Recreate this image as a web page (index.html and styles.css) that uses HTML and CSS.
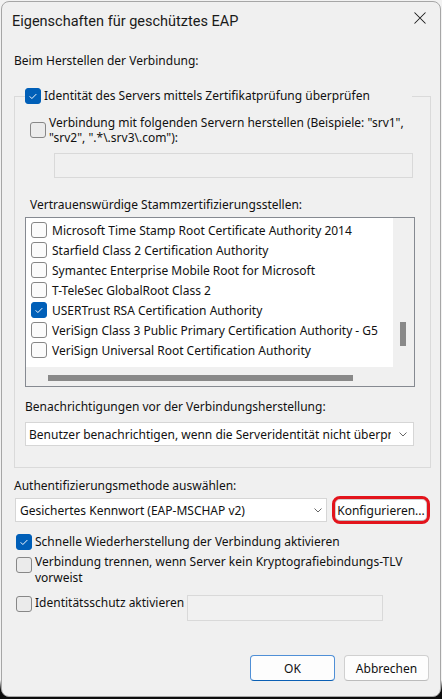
FILE: index.html
```html
<!DOCTYPE html>
<html lang="de">
<head>
<meta charset="utf-8">
<title>Eigenschaften für geschütztes EAP</title>
<link rel="stylesheet" href="styles.css">
</head>
<body>
<div class="window">
  <header class="titlebar">
    <span class="title">Eigenschaften für geschütztes EAP</span>
    <svg class="close" viewBox="0 0 12 12"><path d="M0.5 0.5L11.5 11.5M11.5 0.5L0.5 11.5"/></svg>
  </header>
  <main class="content">
    <div class="label">Beim Herstellen der Verbindung:</div>
    <fieldset class="group">
      <legend class="group-legend">
        <span class="cb on"><svg viewBox="0 0 16 16"><path d="M4.2 8.4l2.5 2.5L11.8 5.8"/></svg></span>
        <span>Identität des Servers mittels Zertifikatprüfung überprüfen</span>
      </legend>
      <div class="check-row servers">
        <span class="cb"></span>
        <span>Verbindung mit folgenden Servern herstellen (Beispiele: "srv1", "srv2", ".*\.srv3\.com"):</span>
      </div>
      <div class="edit servers-edit"></div>
      <div class="label trusted-label">Vertrauenswürdige Stammzertifizierungsstellen:</div>
      <div class="list">
        <div class="list-items">
          <div class="item"><span class="cb"></span><span>Microsoft Time Stamp Root Certificate Authority 2014</span></div>
          <div class="item"><span class="cb"></span><span>Starfield Class 2 Certification Authority</span></div>
          <div class="item"><span class="cb"></span><span>Symantec Enterprise Mobile Root for Microsoft</span></div>
          <div class="item"><span class="cb"></span><span>T-TeleSec GlobalRoot Class 2</span></div>
          <div class="item"><span class="cb on"><svg viewBox="0 0 16 16"><path d="M4.2 8.4l2.5 2.5L11.8 5.8"/></svg></span><span>USERTrust RSA Certification Authority</span></div>
          <div class="item"><span class="cb"></span><span>VeriSign Class 3 Public Primary Certification Authority - G5</span></div>
          <div class="item"><span class="cb"></span><span>VeriSign Universal Root Certification Authority</span></div>
        </div>
        <div class="vscroll"><div class="vthumb"></div></div>
        <div class="hscroll"><div class="hthumb"></div></div>
        <div class="corner"></div>
      </div>
      <div class="label notify-label">Benachrichtigungen vor der Verbindungsherstellung:</div>
      <div class="select notify-select">
        <span class="select-text">Benutzer benachrichtigen, wenn die Serveridentität nicht überprüft werden kann</span>
        <svg class="chev" viewBox="0 0 8 5"><path d="M0.5 0.5L4 4L7.5 0.5"/></svg>
      </div>
    </fieldset>
    <div class="label auth-label">Authentifizierungsmethode auswählen:</div>
    <div class="method-row">
      <div class="select method-select">
        <span class="select-text">Gesichertes Kennwort (EAP-MSCHAP v2)</span>
        <svg class="chev" viewBox="0 0 8 5"><path d="M0.5 0.5L4 4L7.5 0.5"/></svg>
      </div>
      <button class="btn config">Konfigurieren...</button>
    </div>
    <div class="check-row single fast">
      <span class="cb on"><svg viewBox="0 0 16 16"><path d="M4.2 8.4l2.5 2.5L11.8 5.8"/></svg></span>
      <span>Schnelle Wiederherstellung der Verbindung aktivieren</span>
    </div>
    <div class="check-row top disconnect">
      <span class="cb"></span>
      <span>Verbindung trennen, wenn Server kein Kryptografiebindungs-TLV vorweist</span>
    </div>
    <div class="check-row top ident">
      <span class="cb"></span>
      <span class="ident-text">Identitätsschutz aktivieren</span>
      <div class="edit ident-edit"></div>
    </div>
    <footer class="actions">
      <button class="btn primary">OK</button>
      <button class="btn">Abbrechen</button>
    </footer>
  </main>
</div>
</body>
</html>
```
FILE: styles.css
```css
* { box-sizing: border-box; }
html, body { margin: 0; padding: 0; }
body {
  width: 442px;
  height: 699px;
  overflow: hidden;
  background: linear-gradient(#f2f2f2 0, #f2f2f2 680px, #0c0c0c 690px);
  font-family: "Noto Sans", "Segoe UI", Roboto, sans-serif;
  font-size: 12px;
  color: #111;
}
.window {
  margin: 1px 1px 0 1px;
  width: 440px;
  height: 696px;
  border: 1px solid #a6a6a6;
  border-radius: 8px;
  background: #f0f0f0;
  display: flex;
  flex-direction: column;
  overflow: hidden;
}
.titlebar {
  height: 38px;
  flex: none;
  display: flex;
  align-items: center;
  justify-content: space-between;
  padding: 0 14px 0 10px;
}
.title { font-family: Roboto, "Noto Sans", sans-serif; font-size: 14.5px; color: #1a1a1a; }
.close { width: 12px; height: 12px; margin-bottom: 6px; }
.close path { stroke: #1a1a1a; stroke-width: 1.05; fill: none; }

.content {
  flex: 1;
  display: flex;
  flex-direction: column;
  padding: 13px 9px 15px 12px;
}
.label { line-height: 16px; white-space: nowrap; }

.group {
  margin: 19px 0 0;
  padding: 0 0 21px;
  border: 1px solid #dadada;
  min-width: 0;
}
.group-legend {
  margin-left: 10px;
  padding: 0;
  width: 387px;
  height: 16px;
  display: flex;
  align-items: center;
  gap: 3px;
  line-height: 16px;
  white-space: nowrap;
}

.cb {
  width: 16px;
  height: 16px;
  flex: none;
  border: 1px solid #878787;
  border-radius: 3px;
  background: rgba(0, 0, 0, 0.02);
}
.cb.on {
  background: #005fb8;
  border-color: #005fb8;
  display: flex;
}
.cb svg { width: 14px; height: 14px; }
.cb svg path { stroke: #fff; stroke-width: 1.1; fill: none; }

.check-row { display: flex; align-items: center; gap: 3px; line-height: 15px; }
.check-row.top { align-items: flex-start; line-height: 16px; }
.servers { margin: 11px 18px 0 15px; }
.single { height: 16px; line-height: 16px; }

.edit {
  border: 1px solid #d9d9d9;
  background: #f0f0f0;
  flex: none;
}
.servers-edit { margin: 8px 0 0 39px; width: 359px; height: 25px; }

.trusted-label { margin: 19px 0 0 15px; }

.list {
  margin: 4px 0 0 10px;
  width: 390px;
  height: 170px;
  border: 1px solid #868a91;
  display: grid;
  grid-template-columns: 1fr 21px;
  grid-template-rows: 149px 1fr;
  background: #f0f0f0;
}
.list-items { background: #fff; padding-top: 2px; overflow: hidden; }
.item {
  height: 20px;
  display: flex;
  align-items: center;
  gap: 5px;
  padding-left: 5px;
  white-space: nowrap;
}
.item .cb { background: #fbfbfb; }
.item .cb.on { background: #005fb8; }
.vthumb { margin: 104px 0 0 7px; width: 6px; height: 24px; background: #898989; }
.hthumb { margin: 8px 0 0 22px; width: 305px; height: 6px; background: #898989; }

.notify-label { margin: 12px 0 0 10px; }

.select {
  height: 24px;
  border: 1px solid #d6d6d6;
  background: #fff;
  display: flex;
  align-items: center;
  white-space: nowrap;
}
.select-text { flex: 1; overflow: hidden; min-width: 0; }
.chev { width: 8px; height: 5px; flex: none; }
.chev path { stroke: #666; stroke-width: 1; fill: none; }
.notify-select { margin: 7px 0 0 10px; width: 389px; padding: 0 6px 0 3px; }
.notify-select .chev { margin-left: 8px; }

.auth-label { margin-top: 10px; }
.method-row { margin-top: 4px; display: flex; align-items: center; height: 24px; }
.method-select { margin-left: 1px; width: 312px; padding: 0 4px 0 4px; }

.btn {
  font: inherit;
  color: #111;
  background: #fdfdfd;
  border: 1px solid #d0d0d0;
  border-bottom-color: #bcbcbc;
  border-radius: 4px;
  padding: 0;
}
.config {
  margin: 0 4px 0 auto;
  width: 92px;
  height: 22px;
  background: #fff;
  outline: 3px solid #e3141c;
  outline-offset: 0;
  border-radius: 5px;
  white-space: nowrap;
}

.fast { margin: 12px 0 0 2px; }
.disconnect { margin: 4px 10px 0 2px; }
.disconnect .cb { margin-top: 3px; }
.ident { margin: 9px 0 0 2px; }
.ident .cb { margin-top: 1px; }
.ident-text { white-space: nowrap; }
.ident-edit { margin-left: 0; width: 196px; height: 26px; background: #f1f1f1; }

.actions {
  margin-top: auto;
  display: flex;
  justify-content: flex-end;
  gap: 9px;
  padding-right: 2px;
}
.actions .btn { width: 85px; height: 26px; }
.actions .primary { border-color: #4f8fd6; border-bottom-color: #0a5fb4; }
```
